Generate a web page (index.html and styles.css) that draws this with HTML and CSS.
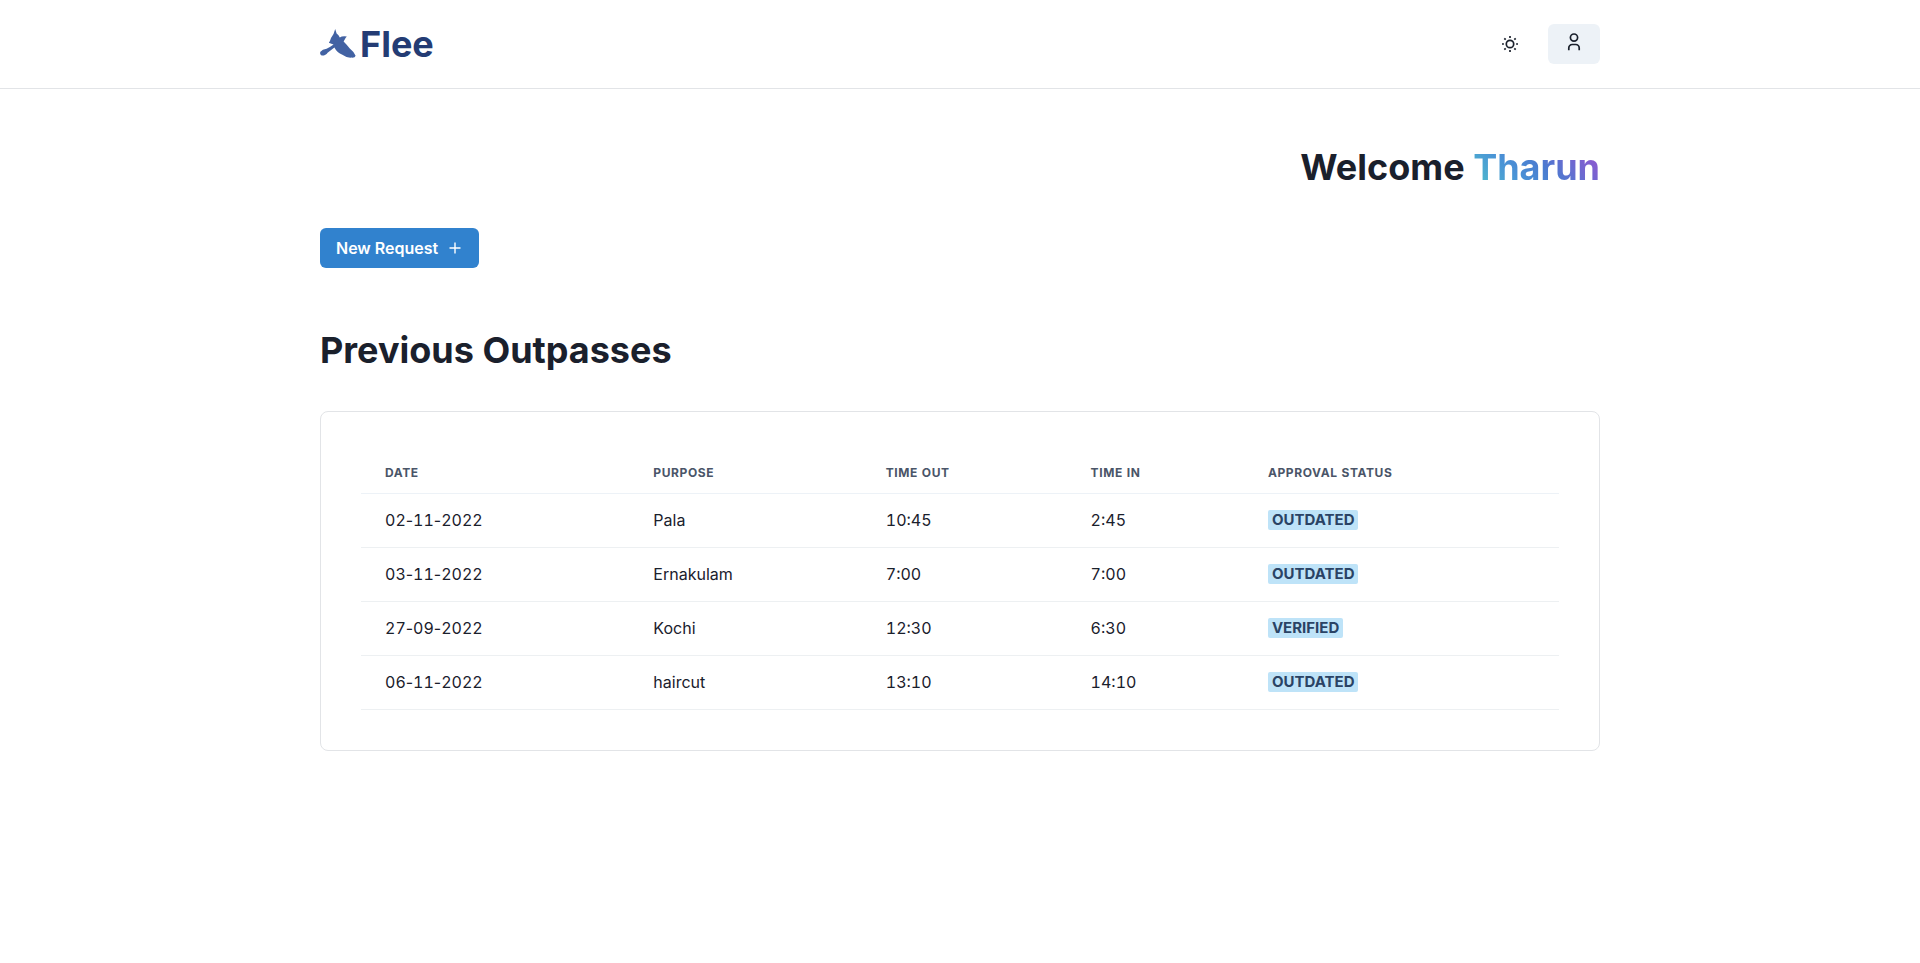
FILE: index.html
```html
<!DOCTYPE html>
<html lang="en">
<head>
  <meta charset="utf-8">
  <meta name="viewport" content="width=device-width, initial-scale=1">
  <title>Flee</title>
  <link rel="stylesheet" href="styles.css">
</head>
<body>
  <header class="site-header">
    <div class="container header-row">
      <a class="logo" href="#">
        <svg class="logo-bird" viewBox="0 0 36 30" aria-hidden="true">
          <path d="M15.2 0 L16.6 4.6 Q18.8 6 19.8 8.4 Q22 6.8 26.8 7.4 Q25.4 8.8 24.6 10.8 L23.6 12.4 Q26.5 15.3 29.8 19.4 Q34 22.6 35.6 26.8 Q35 29 31.4 28.6 Q26.6 29 22.4 25.8 Q17 23.6 14.4 18.4 Q10.4 21.4 7.6 23.8 Q5.8 26.8 1.6 26.6 Q-.6 25.2 .4 22.8 Q2.4 20.2 6.6 19.8 Q10.4 18 13.6 15.6 Q11.4 14.8 8.8 13.8 Q10.2 12 11 9 Q14 5.4 15.2 0 Z"/>
        </svg>
        <span class="logo-name">Flee</span>
      </a>
      <div class="header-actions">
        <button class="icon-button" type="button" aria-label="Toggle color mode">
          <svg class="icon" viewBox="0 0 20 20" aria-hidden="true">
            <circle cx="10" cy="10" r="3.7"/>
            <path d="M10 2v1.9M10 16.1V18M2 10h1.9M16.1 10H18M4.3 4.3l1.4 1.4M14.3 14.3l1.4 1.4M4.3 15.7l1.4-1.4M14.3 5.7l1.4-1.4"/>
          </svg>
        </button>
        <button class="icon-button icon-button-filled" type="button" aria-label="Account">
          <svg class="icon" viewBox="0 0 20 20" aria-hidden="true">
            <circle cx="10" cy="5.6" r="3.6"/>
            <path d="M4.8 18.2V15.9a3.4 3.4 0 0 1 3.4-3.4h3.6a3.4 3.4 0 0 1 3.4 3.4v2.3"/>
          </svg>
        </button>
      </div>
    </div>
  </header>

  <main class="container content">
    <h2 class="heading welcome">Welcome <span class="user-name">Tharun</span></h2>
    <button class="new-request" type="button">
      New Request
      <svg class="plus" viewBox="0 0 16 16" aria-hidden="true"><path d="M8 2.5v11M2.5 8h11"/></svg>
    </button>
    <h2 class="heading section-title">Previous Outpasses</h2>
    <section class="card">
      <table class="outpasses">
        <colgroup>
          <col class="col-date"><col class="col-purpose"><col class="col-out"><col class="col-in"><col class="col-status">
        </colgroup>
        <thead>
          <tr><th>Date</th><th>Purpose</th><th>Time out</th><th>Time in</th><th>Approval status</th></tr>
        </thead>
        <tbody>
          <tr><td>02<span class="dash">-</span>11<span class="dash">-</span>2022</td><td>Pala</td><td>10:45</td><td>2:45</td><td><span class="badge">Outdated</span></td></tr>
          <tr><td>03<span class="dash">-</span>11<span class="dash">-</span>2022</td><td>Ernakulam</td><td>7:00</td><td>7:00</td><td><span class="badge">Outdated</span></td></tr>
          <tr><td>27<span class="dash">-</span>09<span class="dash">-</span>2022</td><td>Kochi</td><td>12:30</td><td>6:30</td><td><span class="badge">Verified</span></td></tr>
          <tr><td>06<span class="dash">-</span>11<span class="dash">-</span>2022</td><td>haircut</td><td>13:10</td><td>14:10</td><td><span class="badge">Outdated</span></td></tr>
        </tbody>
      </table>
    </section>
  </main>
</body>
</html>
```
FILE: styles.css
```css
*,
*::before,
*::after {
  box-sizing: border-box;
}

body {
  margin: 0;
  background: #fff;
  color: #1a202c;
  font-family: Inter, "Liberation Sans", sans-serif;
  font-size: 16px;
  line-height: 24px;
}

button {
  border: 0;
  font: inherit;
  cursor: pointer;
}

.container {
  width: 100%;
  max-width: 1312px;
  margin: 0 auto;
  padding: 0 16px;
}

.site-header {
  padding: 24px 0;
  border-bottom: 1px solid #e2e4e7;
}

.header-row {
  display: flex;
  align-items: center;
  justify-content: space-between;
}

.logo {
  display: flex;
  align-items: center;
  gap: 4px;
  color: #243c74;
  text-decoration: none;
}

.logo-bird {
  width: 36px;
  height: 30px;
  fill: #4262a3;
}

.logo-name {
  font-size: 36px;
  font-weight: 700;
  line-height: 40px;
}

.header-actions {
  display: flex;
  gap: 12px;
}

.icon-button {
  display: flex;
  align-items: center;
  justify-content: center;
  height: 40px;
  padding: 0 16px;
  border-radius: 6px;
  background: transparent;
  color: #1a202c;
}

.icon-button-filled {
  align-items: flex-start;
  padding-top: 8px;
  background: #edf2f7;
}

.icon {
  width: 20px;
  height: 20px;
  fill: none;
  stroke: currentColor;
  stroke-width: 1.7;
}

.content {
  display: flex;
  flex-direction: column;
  align-items: flex-start;
  padding-top: 56px;
  padding-bottom: 56px;
}

.heading {
  margin: 0;
  font-size: 36px;
  font-weight: 700;
  line-height: 45px;
}

.welcome {
  align-self: flex-end;
}

.user-name {
  background: linear-gradient(45deg, #4fc3c9, #4a94d6 32%, #4a7bd0 54%, #9f4fd0);
  -webkit-background-clip: text;
  background-clip: text;
  color: transparent;
}

.new-request {
  display: flex;
  align-items: center;
  gap: 9px;
  height: 40px;
  margin: 38px 0 60px;
  padding: 0 16px;
  border-radius: 6px;
  background: #3182ce;
  color: #fff;
  font-weight: 600;
}

.plus {
  width: 16px;
  height: 16px;
  fill: none;
  stroke: currentColor;
  stroke-width: 1.4;
}

.card {
  width: 100%;
  margin-top: 38px;
  padding: 40px;
  border: 1px solid #e2e4e7;
  border-radius: 8px;
}

.outpasses {
  width: 100%;
  border-spacing: 0;
  font-variant-numeric: lining-nums tabular-nums;
}

.col-date {
  width: 22.4%;
}

.col-purpose {
  width: 19.4%;
}

.col-out {
  width: 17.1%;
}

.col-in {
  width: 14.8%;
}

.col-status {
  width: 26.3%;
}

.outpasses th {
  padding: 12px 24px;
  border-bottom: 1px solid #edf2f7;
  color: #4a5568;
  font-size: 12px;
  font-weight: 700;
  letter-spacing: 0.05em;
  line-height: 17px;
  text-align: left;
  text-transform: uppercase;
}

.outpasses td {
  padding: 16px 24px;
  border-bottom: 1px solid #edf0f2;
  line-height: 21px;
}

.dash {
  font-variant-numeric: normal;
}

.badge {
  display: inline-block;
  padding: 0 4px;
  border-radius: 2px;
  background: #bee3f8;
  color: #2a4365;
  font-size: 15px;
  font-weight: 700;
  line-height: 20px;
  text-transform: uppercase;
  vertical-align: top;
}
```
